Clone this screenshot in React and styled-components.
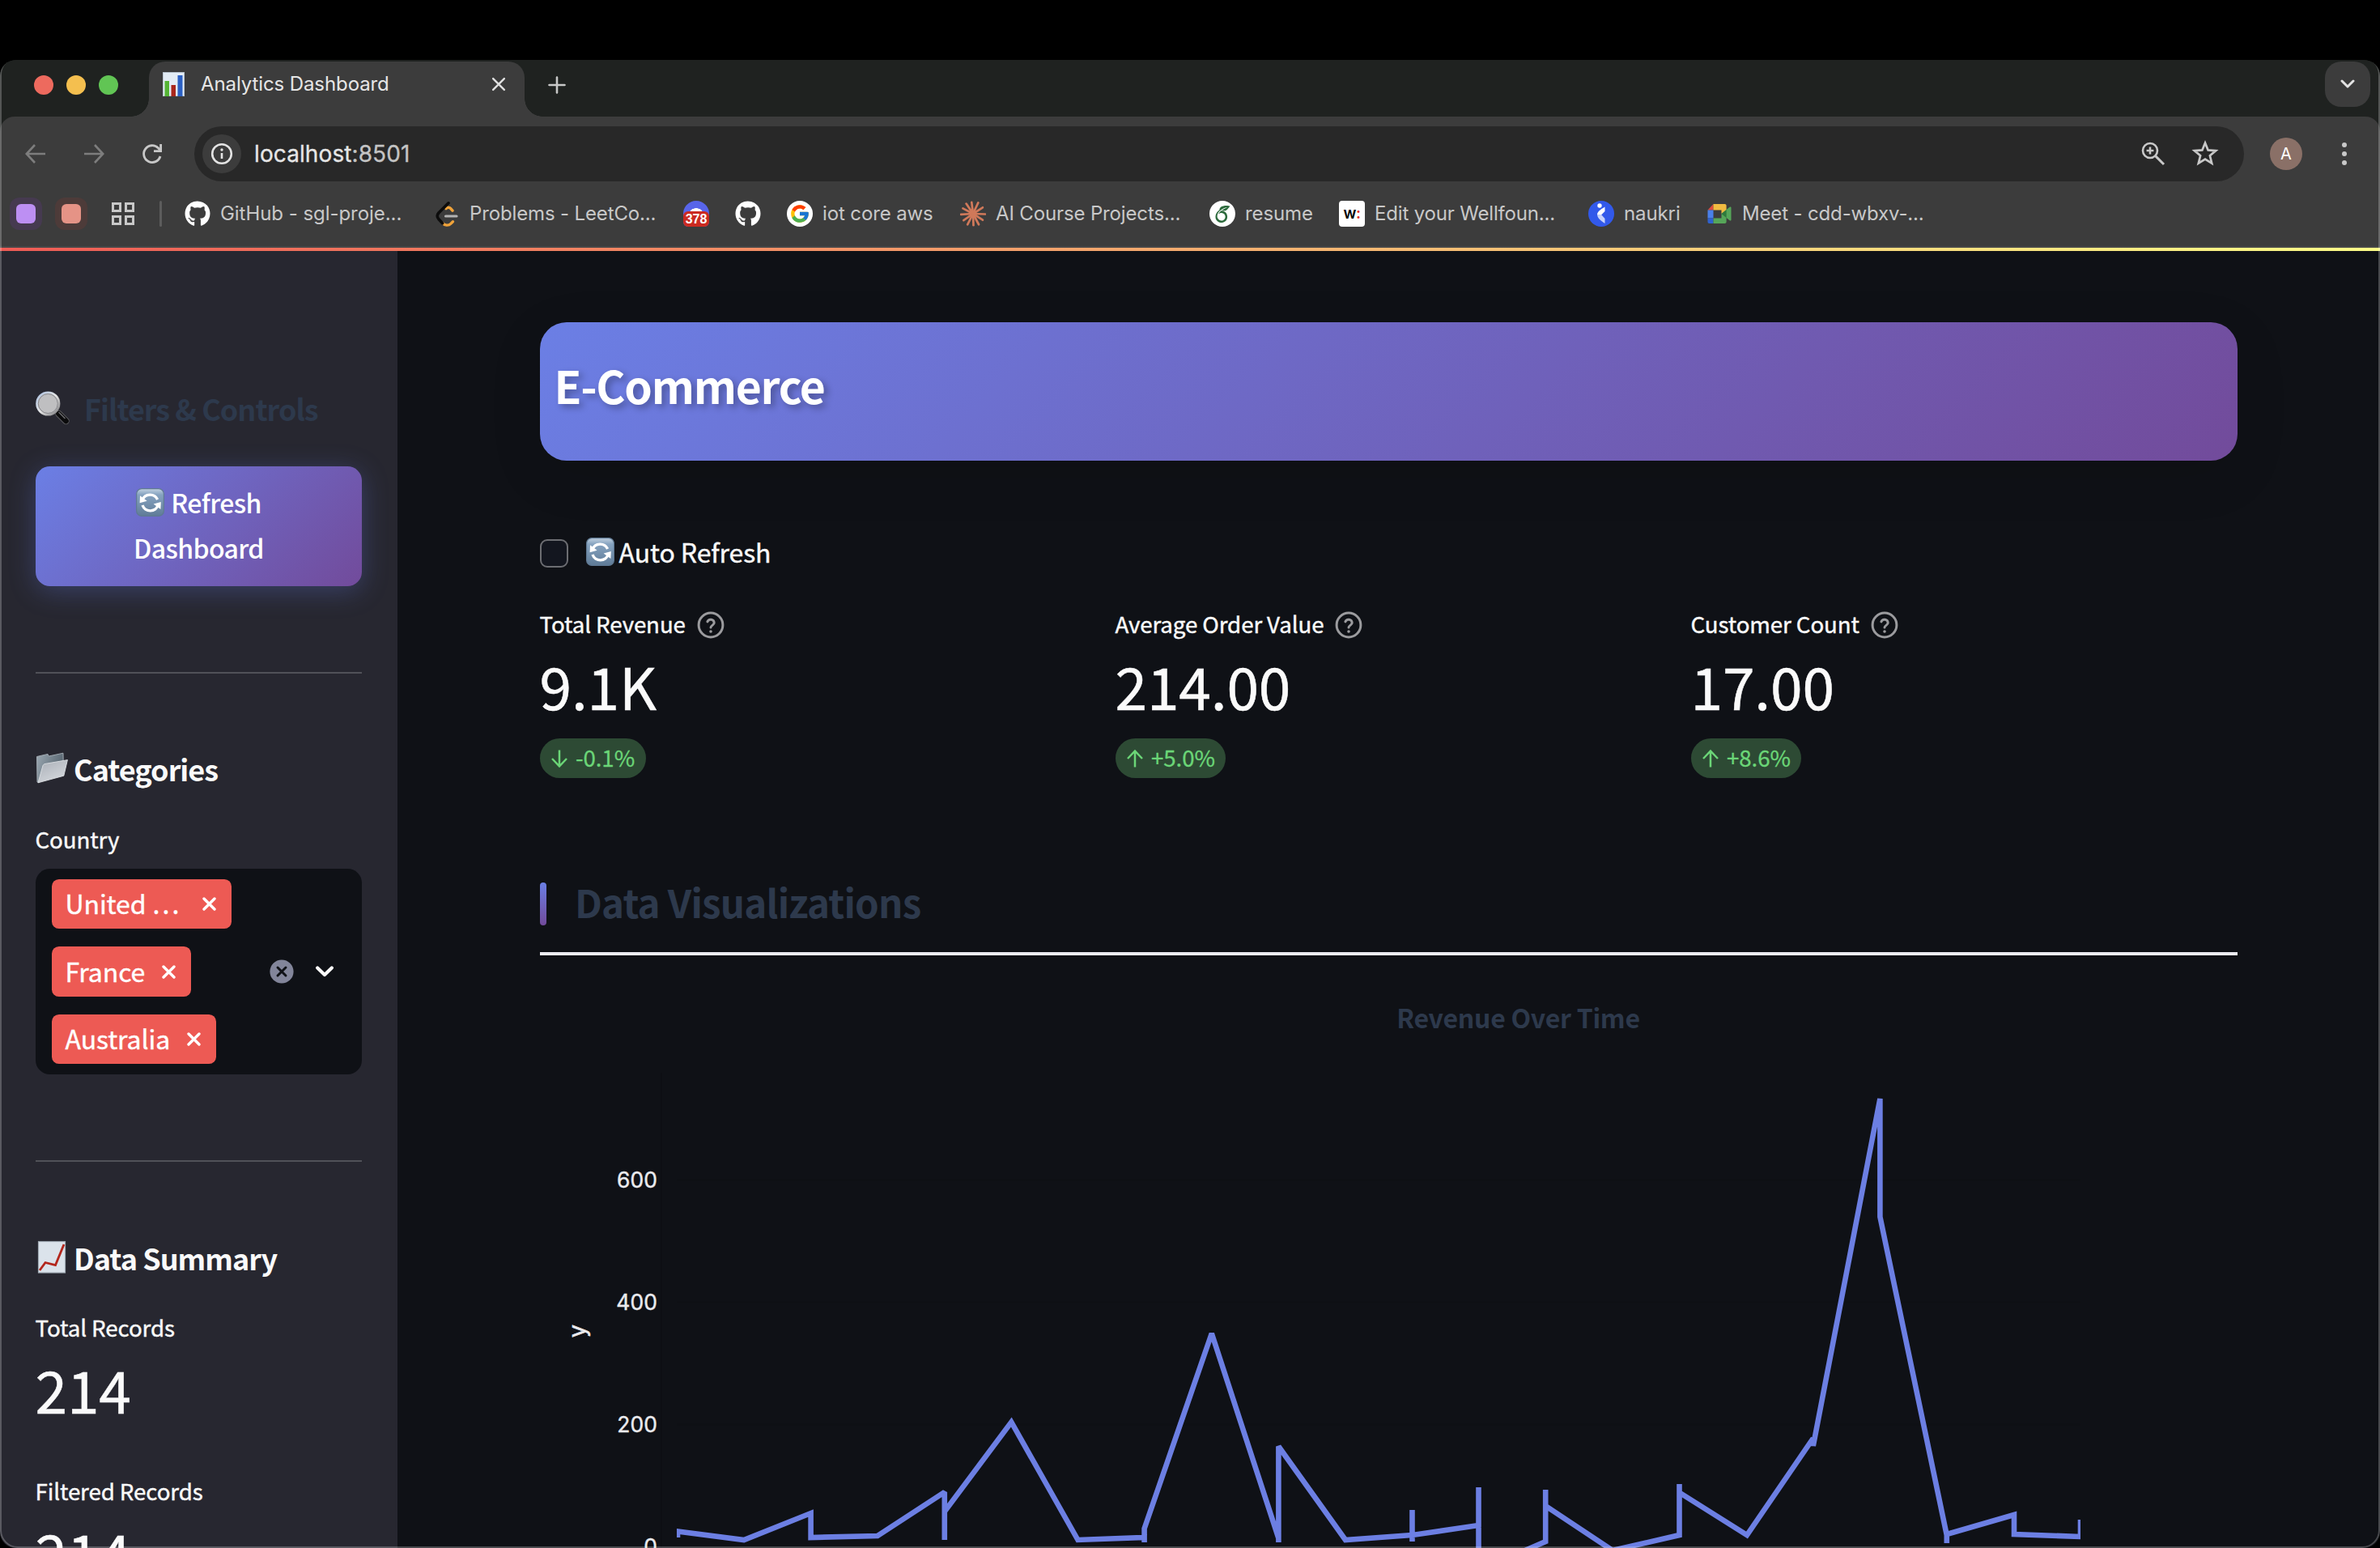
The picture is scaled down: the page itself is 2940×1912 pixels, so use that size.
import React from "react";
import styled, { createGlobalStyle } from "styled-components";
import { FaGithub } from "react-icons/fa";
import { FcGoogle } from "react-icons/fc";
import { SiOverleaf } from "react-icons/si";

const sans = `"Noto Sans CJK SC", "Open Sans", sans-serif`;
const ui = `Inter, "Liberation Sans", sans-serif`;
const slate = "#2d394c";

const GlobalStyle = createGlobalStyle`
  * { box-sizing: border-box; }
  html, body { margin: 0; padding: 0; background: #000; }
  body { width: 2940px; height: 1912px; overflow: hidden; }
  svg { display: block; flex: none; }
`;

const Screen = styled.div`
  width: 2940px;
  height: 1912px;
  padding-top: 74px;
  background: #000;
  overflow: hidden;
`;

const Window = styled.div`
  position: relative;
  display: flex;
  flex-direction: column;
  height: 1838px;
  border-radius: 20px;
  overflow: hidden;
  background: #1f2220;
  &::after {
    content: "";
    position: absolute;
    inset: -4px 0 0 0;
    border: 2px solid rgba(255, 255, 255, 0.24);
    border-radius: 22px;
    pointer-events: none;
  }
`;

/* Tab strip */
const TabStrip = styled.div`
  display: flex;
  height: 70px;
  padding: 2px 12px 0 42px;
  background: #1f2220;
`;

const TrafficLights = styled.div`
  display: flex;
  gap: 16px;
  width: 142px;
  padding-top: 17px;
`;

const Light = styled.span`
  width: 24px;
  height: 24px;
  border-radius: 50%;
  background: ${(p) => p.$color};
`;

const Tab = styled.div`
  position: relative;
  display: flex;
  align-items: center;
  width: 464px;
  height: 68px;
  padding: 0 23px 12px 17px;
  border-radius: 20px 20px 0 0;
  background: #3c3c3c;
  &::before,
  &::after {
    content: "";
    position: absolute;
    bottom: 0;
    width: 22px;
    height: 22px;
  }
  &::before {
    left: -22px;
    background: radial-gradient(circle at 0 0, transparent 21.5px, #3c3c3c 22px);
  }
  &::after {
    right: -22px;
    background: radial-gradient(circle at 100% 0, transparent 21.5px, #3c3c3c 22px);
  }
`;

const TabTitle = styled.span`
  flex: 1;
  margin-left: 20px;
  font: 400 24px/30px ${ui};
  letter-spacing: -0.1px;
  color: #e6e6e6;
  white-space: nowrap;
`;

const NewTab = styled.div`
  flex: 1;
  padding: 18px 0 0 29px;
`;

const TabSearch = styled.div`
  display: flex;
  align-items: center;
  justify-content: center;
  width: 56px;
  height: 56px;
  border-radius: 20px;
  background: #3c3c3c;
`;

/* Toolbar */
const Toolbar = styled.div`
  height: 162px;
  border-bottom: 2px solid #474747;
  border-radius: 18px 18px 0 0;
  background: #3c3c3c;
`;

const NavRow = styled.div`
  display: flex;
  align-items: center;
  height: 92px;
  padding-left: 28px;
`;

const NavButton = styled.div`
  display: flex;
  align-items: center;
  width: ${(p) => p.$width || 72}px;
`;

const Omnibox = styled.div`
  display: flex;
  align-items: center;
  width: 2532px;
  height: 68px;
  padding: 0 30px 0 10px;
  border-radius: 34px;
  background: #282828;
`;

const SiteInfo = styled.span`
  display: flex;
  align-items: center;
  justify-content: center;
  width: 48px;
  height: 48px;
  border-radius: 50%;
  background: #3c3c3c;
`;

const Url = styled.span`
  flex: 1;
  margin-left: 16px;
  font: 400 28px/34px ${ui};
  letter-spacing: 0.1px;
  color: #e6e6e6;
  -webkit-text-stroke: 0.3px currentColor;
  span { color: #c4c4c4; }
`;

const OmniActions = styled.div`
  display: flex;
  align-items: center;
  gap: 30px;
`;

const Avatar = styled.span`
  display: flex;
  align-items: center;
  justify-content: center;
  width: 40px;
  height: 40px;
  margin: 0 49px 0 32px;
  border-radius: 50%;
  background: #8a7067;
  color: #fff;
  font: 400 20px/24px ${ui};
`;

const BookmarkRow = styled.div`
  display: flex;
  align-items: center;
  height: 56px;
  padding-left: 12px;
`;

const GroupChip = styled.span`
  display: flex;
  align-items: center;
  justify-content: center;
  width: 40px;
  height: 40px;
  margin-right: 16px;
  border-radius: 12px;
  background: ${(p) => p.$halo};
  &::before {
    content: "";
    width: 24px;
    height: 24px;
    border-radius: 6px;
    background: ${(p) => p.$color};
  }
`;

const Separator = styled.span`
  width: 3px;
  height: 32px;
  margin: 0 28px 0 31px;
  border-radius: 2px;
  background: #5c5c5c;
`;

const Bookmark = styled.div`
  display: flex;
  align-items: center;
  gap: 12px;
  margin-right: 32px;
`;

const BookmarkLabel = styled.span`
  width: ${(p) => p.$width}px;
  font: 400 24px/30px ${ui};
  letter-spacing: ${(p) => p.$track || 0}px;
  color: #c8c8c8;
  white-space: nowrap;
`;

const RoundIcon = styled.span`
  display: flex;
  align-items: center;
  justify-content: center;
  width: 32px;
  height: 32px;
  border-radius: ${(p) => p.$radius || "50%"};
  background: ${(p) => p.$bg || "#fff"};
  font: 600 19px/32px ${ui};
  letter-spacing: -0.5px;
  color: #000;
  i { font-style: normal; color: #e0302a; }
`;

const CountIcon = styled.span`
  display: flex;
  flex-direction: column;
  align-items: center;
  justify-content: flex-end;
  width: 32px;
  height: 32px;
  border-radius: 16px 16px 6px 6px;
  background: radial-gradient(ellipse 8px 5px at 50% 14px, #fff 90%, transparent), #5865ea;
`;

const CountBadge = styled.span`
  width: 32px;
  height: 19px;
  border-radius: 6px;
  background: #cb2a20;
  color: #fff;
  font: 700 16px/20px "Liberation Sans", sans-serif;
  text-align: center;
`;

/* Page */
const LoadingBar = styled.div`
  height: 4px;
  background: linear-gradient(to right, #ee5b55, #fdfd88);
`;

const Page = styled.div`
  display: flex;
  flex: 1;
  min-height: 0;
  overflow: hidden;
  background: #0f1116;
  font-family: ${sans};
  color: #fafafa;
`;

const Sidebar = styled.aside`
  width: 491px;
  height: 1602px;
  padding: 166px 44px 0;
  background: #272730;
  overflow: hidden;
`;

const SideHeading = styled.h3`
  display: flex;
  align-items: center;
  gap: ${(p) => p.$gap || 7}px;
  height: 56px;
  margin: ${(p) => p.$top || 0}px 0 0;
  font-size: 36px;
  line-height: 56px;
  font-weight: 700;
  letter-spacing: -0.98px;
  color: ${(p) => p.$color || "#fafafa"};
  white-space: nowrap;
`;

const RefreshButton = styled.div`
  height: 148px;
  margin-top: 44px;
  padding-top: 16px;
  border-radius: 17.6px;
  background: linear-gradient(135deg, #6b7fe5 0%, #724b9b 100%);
  box-shadow: 0 6px 33px rgba(102, 126, 234, 0.3);
  font-size: 32px;
  line-height: 56px;
  font-weight: 500;
  letter-spacing: -0.65px;
  text-align: center;
  color: #fff;
`;

const ButtonLine = styled.span`
  display: flex;
  align-items: center;
  justify-content: center;
  gap: 8px;
  height: 56px;
`;

const Divider = styled.hr`
  height: 2px;
  margin: 106px 0 0;
  border: 0;
  background: #505158;
`;

const Label = styled.div`
  display: flex;
  align-items: center;
  gap: 14px;
  height: 44px;
  margin: ${(p) => p.$top || 0}px 0 0 -0.5px;
  font-size: 27.7px;
  line-height: 44px;
  letter-spacing: -0.1px;
  -webkit-text-stroke: 0.4px currentColor;
  white-space: nowrap;
  svg { margin-top: 3px; }
`;

const Value = styled.div`
  height: 106px;
  margin: 1px 0 0 -0.5px;
  font-size: 71.3px;
  line-height: 106px;
  letter-spacing: -0.15px;
  -webkit-text-stroke: 0.5px currentColor;
  white-space: nowrap;
`;

const MultiSelect = styled.div`
  display: flex;
  align-items: center;
  height: 254px;
  margin-top: 15px;
  padding-left: 20px;
  border-radius: 17.6px;
  background: #0f1116;
`;

const Tags = styled.div`
  display: flex;
  flex-direction: column;
  align-items: flex-start;
  gap: 22px;
  width: 268.5px;
`;

const Tag = styled.span`
  display: flex;
  align-items: center;
  justify-content: space-between;
  width: ${(p) => p.$width}px;
  height: 61.6px;
  padding: 0 19px 0 16.5px;
  border-radius: 8.8px;
  background: #ed5a54;
  color: #fff;
  white-space: nowrap;
`;

const TagText = styled.span`
  height: 59px;
  font-size: 32px;
  line-height: 56px;
  letter-spacing: -0.1px;
  -webkit-text-stroke: 0.4px currentColor;
`;

const SelectActions = styled.div`
  display: flex;
  align-items: center;
  gap: 27px;
`;

const Main = styled.main`
  width: 2449px;
  height: 1602px;
  padding: 88px 176px 0;
  overflow: hidden;
`;

const Banner = styled.div`
  height: 171px;
  padding: 37px 0 0 17.5px;
  border-radius: 33px;
  background: linear-gradient(135deg, #6b7fe5 0%, #724b9b 100%);
  box-shadow: 0 18px 66px rgba(0, 0, 0, 0.1);
`;

const BannerTitle = styled.h1`
  margin: 0;
  font-size: 55.3px;
  line-height: 80px;
  font-weight: 700;
  letter-spacing: -1.3px;
  color: #fff;
  text-shadow: 4.4px 4.4px 8.8px rgba(0, 0, 0, 0.3);
`;

const CheckRow = styled.div`
  display: flex;
  align-items: center;
  height: 56px;
  margin-top: 84px;
  font-size: 32px;
  line-height: 56px;
  letter-spacing: -0.1px;
  -webkit-text-stroke: 0.4px currentColor;
`;

const Checkbox = styled.span`
  width: 35px;
  height: 35px;
  margin: 5px 22px 0 0;
  border: 2px solid #6c6d72;
  border-radius: 9px;
  background: #13161f;
`;

const CheckLabel = styled.span`
  margin-left: 5.5px;
`;

const Metrics = styled.div`
  display: grid;
  grid-template-columns: repeat(3, 675px);
  column-gap: 36px;
  margin-top: 39px;
`;

const Metric = styled.div`
  display: flex;
  flex-direction: column;
  align-items: flex-start;
`;

const Delta = styled.div`
  display: flex;
  gap: 9px;
  height: 49px;
  margin-top: 13px;
  padding: 0 13.5px 0 13px;
  border-radius: 25px;
  background: #2d4a34;
  color: #6bd677;
  font-size: 27.7px;
  line-height: 46px;
  letter-spacing: -0.1px;
  -webkit-text-stroke: 0.3px currentColor;
  white-space: nowrap;
  svg { margin-top: 13px; }
`;

const SectionHeader = styled.div`
  display: flex;
  align-items: center;
  height: 99px;
  margin-top: 120px;
  padding-bottom: 31px;
  border-bottom: 4px solid #ededf3;
`;

const SectionMark = styled.span`
  width: 8px;
  height: 53px;
  margin: 7px 35px 0 0;
  border-radius: 4px;
  background: linear-gradient(180deg, #6b7fe5, #724b9b);
`;

const SectionTitle = styled.h2`
  margin: 2px 0 0;
  font-size: 47.5px;
  line-height: 64px;
  font-weight: 700;
  letter-spacing: -0.8px;
  color: ${slate};
`;

const Chart = styled.svg`
  width: 2097px;
  height: 732px;
`;

const stroke = (color, width) => ({
  fill: "none",
  stroke: color,
  strokeWidth: width,
  strokeLinecap: "round",
  strokeLinejoin: "round",
});

const BarChartIcon = () => (
  <svg width="27" height="30" viewBox="0 0 27 30">
    <rect x="0.5" y="0.5" width="26" height="29" fill="#e3ecf5" stroke="#b9c4cf" />
    <rect x="2.5" y="11" width="5.5" height="19" fill="#55b435" />
    <rect x="10.5" y="16" width="5.5" height="14" fill="#a9261d" />
    <rect x="18.5" y="4" width="6" height="26" fill="#2b60c4" />
  </svg>
);

const MagnifierIcon = () => (
  <svg width="42" height="42" viewBox="0 0 42 42">
    <defs>
      <linearGradient id="rim" x1="0" y1="0" x2="1" y2="1">
        <stop offset="0" stopColor="#a9bfe0" />
        <stop offset="0.5" stopColor="#e6e6e6" />
        <stop offset="1" stopColor="#77777a" />
      </linearGradient>
    </defs>
    <path d="M28.5 28L37.5 37" stroke="#5d5d60" strokeWidth="8.4" strokeLinecap="round" />
    <path d="M28.5 28L37.5 37" stroke="#0b0b0c" strokeWidth="6.6" strokeLinecap="round" />
    <path d="M29 26.5L36 33.5" stroke="#6a6a6d" strokeWidth="1.6" strokeLinecap="round" />
    <circle cx="15.3" cy="15.5" r="13.8" fill="#bfbfc1" stroke="url(#rim)" strokeWidth="2.6" />
    <circle cx="15.3" cy="15.5" r="12" fill="none" stroke="#808084" strokeWidth="0.9" />
  </svg>
);

const SyncIcon = () => (
  <svg width="35" height="35" viewBox="0 0 35 35">
    <defs>
      <linearGradient id="key" x1="0" y1="0" x2="0" y2="1">
        <stop offset="0" stopColor="#c3d3e1" />
        <stop offset="0.22" stopColor="#86a3c0" />
        <stop offset="1" stopColor="#5f7b97" />
      </linearGradient>
    </defs>
    <rect x="0.6" y="0.6" width="33.8" height="33.8" rx="6.5" fill="url(#key)" stroke="#5f7993" strokeWidth="1.2" />
    <path d="M7.8 14.8A10.2 10.2 0 0 1 26.6 14" fill="none" stroke="#fff" strokeWidth="3.4" />
    <path d="M27.4 20.6A10.2 10.2 0 0 1 8 21" fill="none" stroke="#fff" strokeWidth="3.4" />
    <path d="M5 9.3L4.6 18.2L13.6 15.8Z" fill="#fff" />
    <path d="M30.8 17L30.4 26L21.6 19.6Z" fill="#fff" />
  </svg>
);

const FolderIcon = () => (
  <svg width="40" height="40" viewBox="0 0 40 40">
    <defs>
      <linearGradient id="back" x1="0" y1="0" x2="1" y2="0.4">
        <stop offset="0" stopColor="#9ba8b2" />
        <stop offset="1" stopColor="#55636e" />
      </linearGradient>
      <linearGradient id="front" x1="0" y1="0" x2="0.6" y2="1">
        <stop offset="0" stopColor="#a9aeb6" />
        <stop offset="1" stopColor="#d3d7dc" />
      </linearGradient>
    </defs>
    <path d="M1.5 5.5L15 2.4L16.2 5L34 1.2L34.2 12L4 37.5L2 37Z" fill="url(#back)" stroke="#a7b0b8" strokeWidth="0.9" />
    <path d="M9 16.5C9.6 15.3 10.5 14.7 12 14.4L39.4 9.6L34.8 29.2L3 37.8Z" fill="url(#front)" stroke="#dde0e4" strokeWidth="0.9" />
  </svg>
);

const TrendIcon = () => (
  <svg width="40" height="42" viewBox="0 0 40 42">
    <rect x="3.5" y="1.5" width="33" height="38.5" fill="#dbe3eb" stroke="#a3adb6" strokeWidth="1.2" />
    <path d="M5 37L12 27.5L24.5 30.5L35 5" fill="none" stroke="#b3271d" strokeWidth="2.8" />
  </svg>
);

const HelpIcon = () => (
  <svg width="34" height="34" viewBox="0 0 34 34">
    <circle cx="17" cy="17" r="14.9" {...stroke("#9b9b9e", 3)} />
    <path d="M12.9 12.9A4.3 4.3 0 0 1 21.2 14.3C21.2 17.1 17 17.6 17 20" {...stroke("#9b9b9e", 3)} />
    <circle cx="17" cy="25" r="1.8" fill="#9b9b9e" />
  </svg>
);

const DeltaArrow = ({ up }) => (
  <svg width="22" height="24" viewBox="0 0 22 24">
    <path
      d={up ? "M11 22.5V3M2 12L11 2.5L20 12" : "M11 1.5V21M2 12L11 21.5L20 12"}
      fill="none"
      stroke="#6bd677"
      strokeWidth="2.5"
    />
  </svg>
);

const CrossIcon = ({ size = 17, color = "#fff", width = 3.4 }) => (
  <svg width={size} height={size} viewBox="0 0 17 17">
    <path d="M2 2L15 15M15 2L2 15" {...stroke(color, width)} />
  </svg>
);

const LeetCodeIcon = () => (
  <svg width="32" height="32" viewBox="0 0 32 32">
    <path d="M15 9.6C17 7.8 19.2 8 21 9.8L23 12.2" {...stroke("#f0a33a", 3.4)} />
    <path d="M10.8 27.6C13 30.6 18.2 31 20.8 28.4L23.4 25.8" {...stroke("#f0a33a", 3.4)} />
    <path d="M18 2.8L6 14.8C3.8 17.3 3.8 20.4 6 22.8L10.6 27.8" {...stroke("#0c0c0c", 3.6)} />
    <path d="M14.5 19H28" {...stroke("#b3b3b3", 3.2)} />
  </svg>
);

const BurstIcon = () => (
  <svg width="32" height="32" viewBox="-16 -16 32 32">
    {[2, 33, 62, 88, 117, 145, 177, 208, 236, 263, 295, 327].map((a, i) => (
      <path
        key={a}
        d={`M0 0L${i % 2 ? 14.2 : 15} 0`}
        transform={`rotate(${a})`}
        stroke="#d0795a"
        strokeWidth="2.7"
        strokeLinecap="round"
      />
    ))}
  </svg>
);

const NaukriIcon = () => (
  <svg width="32" height="32" viewBox="0 0 32 32">
    <circle cx="16" cy="16" r="16" fill="#3259ea" />
    <circle cx="14" cy="6" r="2.7" fill="#fff" />
    <path d="M20.5 7.5V13L16 17.5L11 17.2C10.7 14 15.3 10.5 20.5 7.5Z" fill="#fff" />
    <path d="M11 17.2L16 17L20.5 22V28C15.5 24.5 11.5 21.5 11 17.2Z" fill="#c8d3fb" />
  </svg>
);

const MeetIcon = () => (
  <svg width="32" height="32" viewBox="0 0 32 32">
    <path d="M1.5 11.5L8.5 4V11.5Z" fill="#dd4b3e" />
    <path d="M1.5 11.5H8.5V21.5H1.5Z" fill="#4a80ea" />
    <path d="M1.5 21.5H8.5V28H3.5C2.2 28 1.5 27.3 1.5 26Z" fill="#2f62cf" />
    <path d="M8.5 4H22.5C23.8 4 24.6 4.8 24.6 6V12L18.5 16V11.5H8.5Z" fill="#f1bb41" />
    <path d="M8.5 21.5H18.5V16L24.6 20V26C24.6 27.3 23.8 28 22.5 28H8.5Z" fill="#56a659" />
    <path d="M18.5 16L28.6 7.8C29.6 7.2 30.5 7.6 30.5 8.6V23.4C30.5 24.4 29.6 24.8 28.6 24.2Z" fill="#56a659" />
    <path d="M18.5 16L24.6 11V21Z" fill="#2f7a3c" />
  </svg>
);

const AppsIcon = () => (
  <svg width="28" height="28" viewBox="0 0 28 28">
    {[[0, 0], [16, 0], [0, 16], [16, 16]].map(([x, y]) => (
      <rect key={`${x}-${y}`} x={x + 1.5} y={y + 1.5} width="9" height="9" fill="none" stroke="#c8c8c8" strokeWidth="3" />
    ))}
  </svg>
);

const bookmarks = [
  { icon: <FaGithub size={32} color="#fff" />, label: "GitHub - sgl-proje...", width: 232, track: -0.05 },
  { icon: <LeetCodeIcon />, label: "Problems - LeetCo...", width: 232, track: -0.14 },
  { icon: <CountIcon><CountBadge>378</CountBadge></CountIcon> },
  { icon: <FaGithub size={32} color="#fff" /> },
  { icon: <RoundIcon><FcGoogle size={26} /></RoundIcon>, label: "iot core aws", width: 138, track: -0.12 },
  { icon: <BurstIcon />, label: "AI Course Projects...", width: 232, track: -0.14 },
  { icon: <RoundIcon><SiOverleaf size={21} color="#2c6a3c" /></RoundIcon>, label: "resume", width: 84, track: -0.1 },
  { icon: <RoundIcon $radius="4px">w<i>:</i></RoundIcon>, label: "Edit your Wellfoun...", width: 232, track: -0.17 },
  { icon: <NaukriIcon />, label: "naukri", width: 70, track: -0.1 },
  { icon: <MeetIcon />, label: "Meet - cdd-wbxv-...", width: 232, track: -0.15 },
];

const metrics = [
  { label: "Total Revenue", value: "9.1K", delta: "-0.1%", up: false },
  { label: "Average Order Value", value: "214.00", delta: "+5.0%", up: true },
  { label: "Customer Count", value: "17.00", delta: "+8.6%", up: true },
];

const countries = [
  { name: "United …", width: 222 },
  { name: "France", width: 172 },
  { name: "Australia", width: 203 },
];

const revenue = [
  [837, 1899], [837, 1891.5], [919, 1902], [1001.6, 1869], [1001.6, 1899], [1084, 1897],
  [1166.8, 1843], [1166.8, 1902], [1166.8, 1867], [1249.3, 1756.5], [1331.5, 1902], [1413.6, 1899],
  [1413.6, 1905], [1413.6, 1888], [1496.8, 1647], [1579.4, 1900], [1579.4, 1905], [1579.4, 1786.5],
  [1662, 1902], [1744.5, 1896], [1744.5, 1865], [1744.5, 1904], [1744.5, 1896], [1826.5, 1884],
  [1826.5, 1837], [1826.5, 1940], [1909.2, 1904], [1909.2, 1840], [1909.2, 1860], [1992, 1915],
  [2074.5, 1896], [2074.5, 1833], [2074.5, 1843.5], [2158, 1896], [2239.8, 1776.5], [2239.8, 1786],
  [2322.4, 1357], [2322.4, 1503], [2404.8, 1896], [2404.8, 1906], [2404.8, 1895], [2488, 1871],
  [2488, 1895], [2570, 1898], [2570, 1877],
];

const yTicks = [
  { label: "600", y: 1457.5 },
  { label: "400", y: 1608.5 },
  { label: "200", y: 1759.5 },
  { label: "0", y: 1910.5 },
];

function RevenueChart() {
  return (
    <Chart viewBox="667 1180 2097 732">
      <defs>
        <clipPath id="plot">
          <rect x="836" y="1320" width="1734" height="600" />
        </clipPath>
      </defs>
      <text x="1875.5" y="1270" textAnchor="middle" fontFamily={sans} fontSize="32" fontWeight="700" letterSpacing="-0.28" fill={slate}>
        Revenue Over Time
      </text>
      <path d="M817 1325V1912" stroke="#0d0e13" strokeWidth="2" />
      {yTicks.map((t) => (
        <g key={t.label}>
          <path d={`M836 ${t.y}H2570`} stroke="#0e1014" strokeWidth="2" />
          <text x="812" y={t.y + 9.8} textAnchor="end" fontFamily={ui} fontSize="26.4" letterSpacing="0.1" fill="#ebebee" stroke="#ebebee" strokeWidth="0.4">
            {t.label}
          </text>
        </g>
      ))}
      <text transform="translate(723 1644) rotate(-90)" textAnchor="middle" fontFamily={ui} fontSize="29" fill="#ebebee" stroke="#ebebee" strokeWidth="0.5">
        y
      </text>
      <polyline
        clipPath="url(#plot)"
        points={revenue.map((p) => p.join(",")).join(" ")}
        fill="none"
        stroke="#6c7fe3"
        strokeWidth="6.6"
        strokeMiterlimit="2"
      />
    </Chart>
  );
}

export default function App() {
  return (
    <Screen>
      <GlobalStyle />
      <Window>
        <TabStrip>
          <TrafficLights>
            <Light $color="#ed6a5e" />
            <Light $color="#f4bf4f" />
            <Light $color="#61c554" />
          </TrafficLights>
          <Tab>
            <BarChartIcon />
            <TabTitle>Analytics Dashboard</TabTitle>
            <CrossIcon size={18} color="#dedede" width={2.3} />
          </Tab>
          <NewTab>
            <svg width="22" height="22" viewBox="0 0 22 22">
              <path d="M11 1.5V20.5M1.5 11H20.5" {...stroke("#c8c8c8", 2.6)} />
            </svg>
          </NewTab>
          <TabSearch>
            <svg width="18" height="12" viewBox="0 0 18 12">
              <path d="M2 2L9 9L16 2" {...stroke("#e3e3e3", 3)} />
            </svg>
          </TabSearch>
        </TabStrip>
        <Toolbar>
          <NavRow>
            <NavButton>
              <svg width="32" height="28" viewBox="0 0 32 28">
                <path d="M28 14H5M15 3L4.8 14L15 25" fill="none" stroke="#7d7d7d" strokeWidth="2.6" />
              </svg>
            </NavButton>
            <NavButton>
              <svg width="32" height="28" viewBox="0 0 32 28">
                <path d="M4 14H27M17 3L27.2 14L17 25" fill="none" stroke="#7d7d7d" strokeWidth="2.6" />
              </svg>
            </NavButton>
            <NavButton $width={68}>
              <svg width="32" height="28" viewBox="0 0 32 28">
                <path d="M26 17A10.4 10.4 0 1 1 23.4 6.8L26 9.6" fill="none" stroke="#c8c8c8" strokeWidth="2.8" />
                <path d="M26.6 2V10.6H18" fill="none" stroke="#c8c8c8" strokeWidth="2.8" />
              </svg>
            </NavButton>
            <Omnibox>
              <SiteInfo>
                <svg width="28" height="28" viewBox="0 0 28 28">
                  <circle cx="14" cy="14" r="11.8" {...stroke("#e3e3e3", 2.6)} />
                  <path d="M14 13V20" stroke="#e3e3e3" strokeWidth="2.6" />
                  <circle cx="14" cy="9" r="1.7" fill="#e3e3e3" />
                </svg>
              </SiteInfo>
              <Url>
                localhost<span>:8501</span>
              </Url>
              <OmniActions>
                <svg width="32" height="32" viewBox="0 0 32 32">
                  <circle cx="12" cy="12" r="9" {...stroke("#c8c8c8", 2.6)} />
                  <path d="M18.6 18.6L29 29" stroke="#c8c8c8" strokeWidth="3" />
                  <path d="M12 7.6V16.4M7.6 12H16.4" stroke="#c8c8c8" strokeWidth="2.6" />
                </svg>
                <svg width="36" height="36" viewBox="0 0 36 36">
                  <path
                    d="M18 4.5L21.6 13.4L31.2 14.1L23.9 20.3L26.2 29.6L18 24.5L9.8 29.6L12.1 20.3L4.8 14.1L14.4 13.4Z"
                    fill="none"
                    stroke="#c8c8c8"
                    strokeWidth="2.7"
                  />
                </svg>
              </OmniActions>
            </Omnibox>
            <Avatar>A</Avatar>
            <svg width="6" height="30" viewBox="0 0 6 30">
              {[4, 15, 26].map((cy) => (
                <circle key={cy} cx="3" cy={cy} r="3" fill="#c8c8c8" />
              ))}
            </svg>
          </NavRow>
          <BookmarkRow>
            <GroupChip $halo="#463a50" $color="#bd8ff3" />
            <GroupChip $halo="#4d3b39" $color="#e59386" />
            <svg width="14" height="1" />
            <AppsIcon />
            <Separator />
            {bookmarks.map((b, i) => (
              <Bookmark key={i}>
                {b.icon}
                {b.label && (
                  <BookmarkLabel $width={b.width} $track={b.track}>
                    {b.label}
                  </BookmarkLabel>
                )}
              </Bookmark>
            ))}
          </BookmarkRow>
        </Toolbar>
        <LoadingBar />
        <Page>
          <Sidebar>
            <SideHeading $gap={18} $color={slate}>
              <MagnifierIcon />
              Filters &amp; Controls
            </SideHeading>
            <RefreshButton>
              <ButtonLine>
                <SyncIcon />
                Refresh
              </ButtonLine>
              <ButtonLine>Dashboard</ButtonLine>
            </RefreshButton>
            <Divider />
            <SideHeading $top={89}>
              <FolderIcon />
              Categories
            </SideHeading>
            <Label $top={37}>Country</Label>
            <MultiSelect>
              <Tags>
                {countries.map((c) => (
                  <Tag key={c.name} $width={c.width}>
                    <TagText>{c.name}</TagText>
                    <CrossIcon />
                  </Tag>
                ))}
              </Tags>
              <SelectActions>
                <svg width="30" height="30" viewBox="0 0 30 30">
                  <circle cx="15" cy="15" r="14.6" fill="#82859a" />
                  <path d="M10 10L20 20M20 10L10 20" {...stroke("#0f1116", 3)} />
                </svg>
                <svg width="22" height="14" viewBox="0 0 22 14">
                  <path d="M2.2 2.4L11 11L19.8 2.4" {...stroke("#fafafa", 4.2)} />
                </svg>
              </SelectActions>
            </MultiSelect>
            <Divider />
            <SideHeading $top={90}>
              <TrendIcon />
              Data Summary
            </SideHeading>
            <Label $top={36}>Total Records</Label>
            <Value>214</Value>
            <Label $top={51}>Filtered Records</Label>
            <Value>214</Value>
          </Sidebar>
          <Main>
            <Banner>
              <BannerTitle>E-Commerce</BannerTitle>
            </Banner>
            <CheckRow>
              <Checkbox />
              <SyncIcon />
              <CheckLabel>Auto Refresh</CheckLabel>
            </CheckRow>
            <Metrics>
              {metrics.map((m) => (
                <Metric key={m.label}>
                  <Label>
                    {m.label}
                    <HelpIcon />
                  </Label>
                  <Value>{m.value}</Value>
                  <Delta>
                    <DeltaArrow up={m.up} />
                    {m.delta}
                  </Delta>
                </Metric>
              ))}
            </Metrics>
            <SectionHeader>
              <SectionMark />
              <SectionTitle>Data Visualizations</SectionTitle>
            </SectionHeader>
            <RevenueChart />
          </Main>
        </Page>
      </Window>
    </Screen>
  );
}
